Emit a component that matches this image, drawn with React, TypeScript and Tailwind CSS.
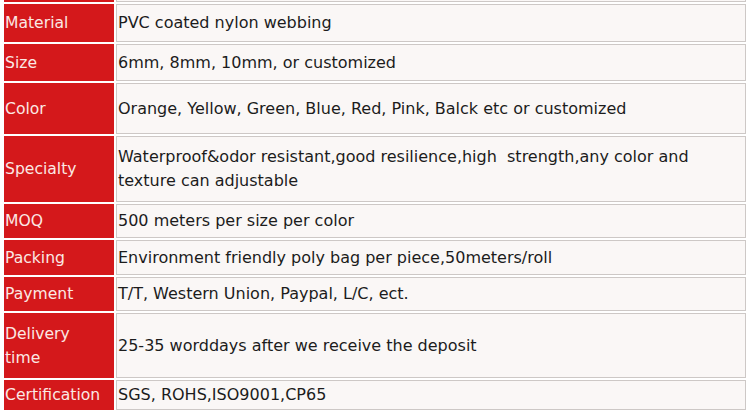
const rows: { label: React.ReactNode; value: React.ReactNode; h: string }[] = [
  { label: 'Material', value: 'PVC coated nylon webbing', h: 'h-[38px]' },
  { label: 'Size', value: '6mm, 8mm, 10mm, or customized', h: 'h-[37px]' },
  { label: 'Color', value: 'Orange, Yellow, Green, Blue, Red, Pink, Balck etc or customized', h: 'h-[51px]' },
  {
    label: 'Specialty',
    value: (
      <>
        Waterproof&amp;odor resistant,good resilience,high&nbsp; strength,any color and
        <br />
        texture can adjustable
      </>
    ),
    h: 'h-[66px]',
  },
  { label: 'MOQ', value: '500 meters per size per color', h: 'h-[34px]' },
  { label: 'Packing', value: 'Environment friendly poly bag per piece,50meters/roll', h: 'h-[35px]' },
  { label: 'Payment', value: 'T/T, Western Union, Paypal, L/C, ect.', h: 'h-[34px]' },
  {
    label: (
      <>
        Delivery
        <br />
        time
      </>
    ),
    value: '25-35 worddays after we receive the deposit',
    h: 'h-[65px]',
  },
  { label: 'Certification', value: 'SGS, ROHS,ISO9001,CP65', h: 'h-[30px]' },
]

export default function App() {
  return (
    <div className="w-[748px] h-[414px] overflow-hidden bg-white pl-[4px] font-['DejaVu_Sans',Verdana,sans-serif] text-[16px] leading-[24px]">
      <div className="flex flex-col gap-[2px]">
        {/* tail of the row above, cut off by the screenshot */}
        <div className="flex gap-[2px] h-[2px]">
          <div className="w-[110px] bg-[#d4181b]" />
          <div className="w-[630px] border-b border-x border-[#cdc8c6] bg-[#faf7f6]" />
        </div>

        {rows.map((row, i) => (
          <div key={i} className={`flex gap-[2px] ${row.h}`}>
            <div className="w-[110px] flex items-center pl-[1px] bg-[#d4181b] text-[#fbe8e4] text-[15.6px]">
              <span>{row.label}</span>
            </div>
            <div className="w-[630px] flex items-center pl-[1px] border border-[#cdc8c6] bg-[#faf7f6] text-[#1c1c1c]">
              <span>{row.value}</span>
            </div>
          </div>
        ))}
      </div>
    </div>
  )
}
